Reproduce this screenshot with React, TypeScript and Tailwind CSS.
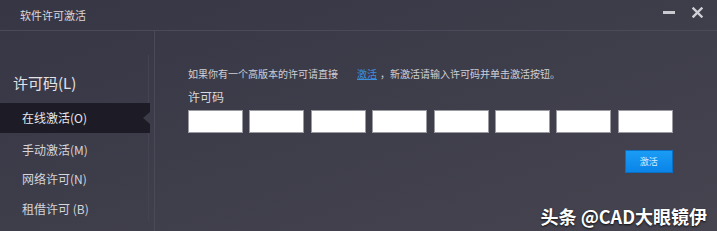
import React from "react";

const cjk = '"Noto Sans CJK SC", "Liberation Sans", sans-serif';

export default function App() {
  const boxes = [0, 1, 2, 3, 4, 5, 6, 7];
  return (
    <div
      className="relative w-[717px] h-[231px] overflow-hidden flex flex-col bg-gradient-to-br from-[#373645] to-[#45444f] text-[#dcdce2]"
      style={{ fontFamily: cjk }}
    >
      {/* title bar */}
      <div className="h-[31px] shrink-0 flex items-center border-b border-[#4b4a58] pl-[20px] pr-[14px]">
        <span className="text-[11px] text-[#d8d8de] leading-none">软件许可激活</span>
        <div className="ml-auto flex items-center gap-[17px]">
          <div className="w-[12px] h-[3px] bg-[#c9c9cf] mt-[-6px]" />
          <svg width="11" height="11" viewBox="0 0 11 11" className="mt-[-6px]">
            <path d="M1.5 1.5 L9.5 9.5 M9.5 1.5 L1.5 9.5" stroke="#d0d0d6" strokeWidth="2.4" strokeLinecap="square" />
          </svg>
        </div>
      </div>

      <div className="flex flex-1">
        {/* left nav */}
        <div className="w-[155px] shrink-0 border-r border-[#4a4958] relative">
          <div className="absolute left-[148px] top-[24px] bottom-[10px] w-px bg-[#444352]" />
          <div className="h-[72px] flex items-end pl-[13px] pb-[13px]">
            <span className="text-[15px] leading-none text-[#e2e2e8]">许可码(L)</span>
          </div>
          <div className="relative w-[150px] h-[30px] bg-[#1d1c26] flex items-center pl-[22px]">
            <span className="text-[12px] text-[#e6e6ea] leading-none">在线激活(O)</span>
            <div className="absolute right-0 top-[9px] w-0 h-0 border-y-[6px] border-y-transparent border-r-[7px] border-r-[#3c3b48]" />
          </div>
          <div className="flex flex-col pl-[22px] text-[12px] text-[#d4d4da]">
            <div className="h-[31px] flex items-center pt-[3px]">手动激活(M)</div>
            <div className="h-[30px] flex items-center">网络许可(N)</div>
            <div className="h-[30px] flex items-center">租借许可 (B)</div>
          </div>
        </div>

        {/* right content */}
        <div className="flex-1 pl-[33px] pr-[46px] pt-[37px] flex flex-col">
          <div className="text-[10px] leading-none text-[#cfcfd6] flex items-center h-[12px]">
            <span>如果你有一个高版本的许可请直接</span>
            <span className="ml-[19px] text-[#3a8fe0] underline">激活</span>
            <span className="ml-[3px]">，新激活请输入许可码并单击激活按钮。</span>
          </div>
          <div className="mt-[11px] text-[12px] leading-none text-[#d8d8de]">许可码</div>
          <div className="mt-[7px] flex gap-[6.4px]">
            {boxes.map((b) => (
              <div key={b} className="w-[55px] h-[23px] bg-white border border-[#9a9aa2]" />
            ))}
          </div>
          <div className="mt-[17px] flex justify-end">
            <div className="w-[48px] h-[23px] bg-gradient-to-b from-[#1a9cf5] to-[#0a84e8] border border-[#0b6fc4] flex items-center justify-center text-[9px] text-[#d9ecff]">
              激活
            </div>
          </div>
        </div>
      </div>

      <div
        className="absolute right-[10px] bottom-[6px] text-[18px] font-semibold text-white leading-none"
        style={{ textShadow: "0 1px 2px rgba(0,0,0,0.8)" }}
      >
        头条 @CAD大眼镜伊
      </div>
    </div>
  );
}
